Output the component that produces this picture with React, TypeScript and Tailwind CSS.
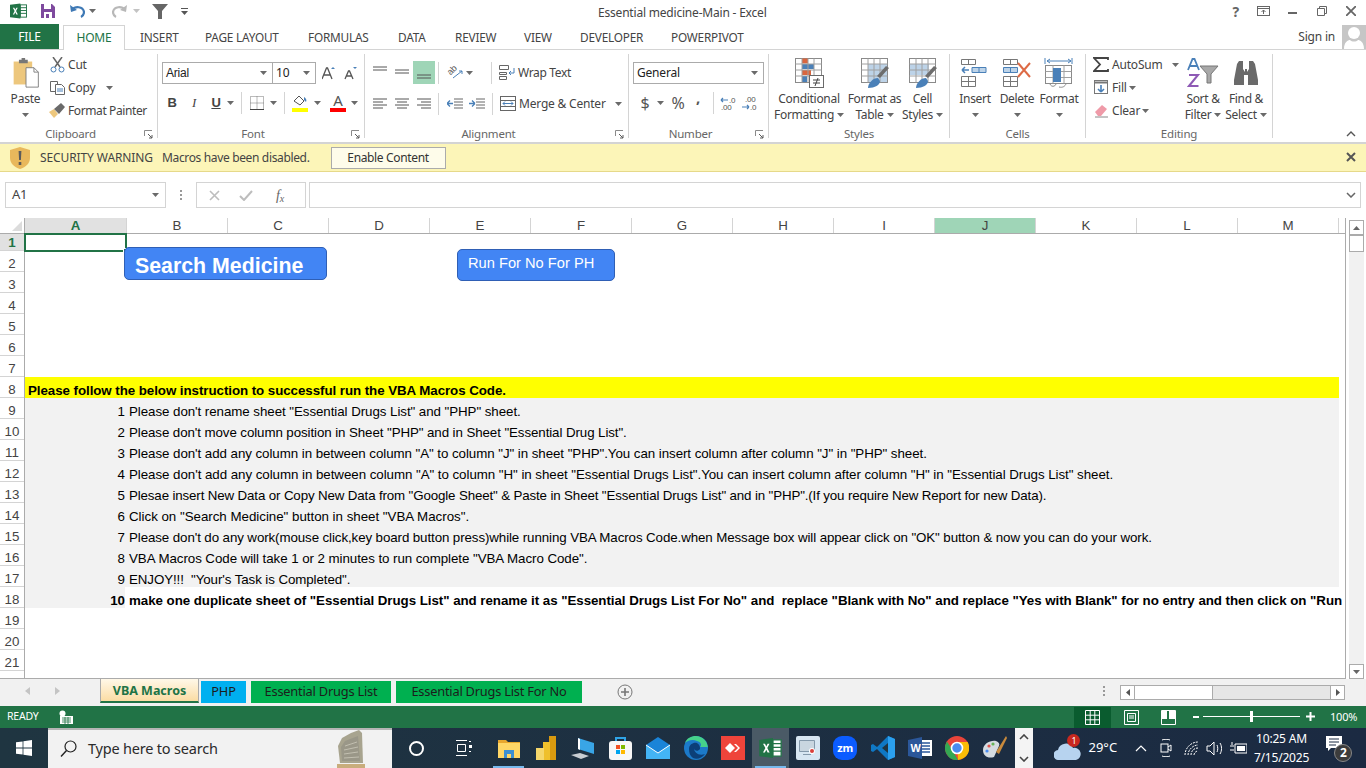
import React from 'react';

const COLUMNS = ['A', 'B', 'C', 'D', 'E', 'F', 'G', 'H', 'I', 'J', 'K', 'L', 'M'];

// tracking per row: the reference's hinted Arial doesn't advance evenly
const STEPS = [
    { text: `Please don't rename sheet "Essential Drugs List" and "PHP" sheet.`, tracking: 'tracking-[-0.06px]' },
    { text: `Please don't move column position in Sheet "PHP" and in Sheet "Essential Drug List".`, tracking: 'tracking-[-0.09px]' },
    { text: `Please don't add any column in between column "A" to column "J" in sheet "PHP".You can insert column after column "J" in "PHP" sheet.`, tracking: 'tracking-[-0.06px]' },
    { text: `Please don't add any column in between column "A" to column "H" in sheet "Essential Drugs List".You can insert column after column "H" in "Essential Drugs List" sheet.`, tracking: 'tracking-[-0.05px]' },
    { text: `Plesae insert New Data or Copy New Data from "Google Sheet" & Paste in Sheet "Essential Drugs List" and in "PHP".(If you require New Report for new Data).`, tracking: 'tracking-[-0.14px]' },
    { text: `Click on "Search Medicine" button in sheet "VBA Macros".`, tracking: 'tracking-[-0.02px]' },
    { text: `Please don't do any work(mouse click,key board button press)while running VBA Macros Code.when Message box will appear click on "OK" button & now you can do your work.`, tracking: 'tracking-[-0.1px]' },
    { text: `VBA Macros Code will take 1 or 2 minutes to run complete "VBA Macro Code".`, tracking: 'tracking-[-0.06px]' },
    { text: `ENJOY!!!  "Your's Task is Completed".`, tracking: 'tracking-[-0.09px]' },
    { text: `make one duplicate sheet of "Essential Drugs List" and rename it as "Essential Drugs List For No" and  replace "Blank with No" and replace "Yes with Blank" for no entry and then click on "Run`, tracking: 'tracking-[-0.05px]' },
];

const ROW_NUMBERS = Array.from({ length: 22 }, (_, i) => i + 1);

function Caret({ className = '' }: { className?: string }) {
    return (
        <svg width="7" height="4" viewBox="0 0 7 4" className={`shrink-0 ${className}`}>
            <path d="M0 0h7L3.5 4z" fill="#6a6a6a" />
        </svg>
    );
}

function DialogMark() {
    return (
        <svg width="9" height="9" viewBox="0 0 9 9" className="absolute right-[4px] bottom-[-1px]">
            <path d="M.5 6V.5H8" fill="none" stroke="#8a8a8a" />
            <path d="M4 4l4 4M8 5v3H5" fill="none" stroke="#5a5a5a" />
        </svg>
    );
}

function Group({ label, width, mark, children }: { label: string; width: string; mark?: boolean; children: React.ReactNode }) {
    return (
        <div className={`relative h-[84px] mt-[4px] border-r border-[#d4d4d4] shrink-0 ${width}`}>
            <div className="h-[72px]">{children}</div>
            <div className={`absolute left-0 right-0 bottom-[-4px] text-center text-[11.5px] leading-[16px] text-[#666666] ${mark ? 'pr-[16px]' : ''}`}>{label}</div>
            {mark && <DialogMark />}
        </div>
    );
}

function BigButton({ icon, lines, width, caretOnly }: { icon: React.ReactNode; lines: string[]; width: string; caretOnly?: boolean }) {
    return (
        <div className={`flex flex-col items-center shrink-0 ${width}`}>
            <div className="h-[37px] flex items-center justify-center">{icon}</div>
            <div className="text-[12px] leading-[16px] text-[#444444] whitespace-nowrap tracking-[-0.3px]">{lines[0]}</div>
            {caretOnly ? (
                <Caret className="mt-[6px]" />
            ) : (
                <div className="flex items-center gap-[3px] text-[12px] leading-[16px] text-[#444444] whitespace-nowrap tracking-[-0.3px]">
                    {lines[1]}
                    <Caret />
                </div>
            )}
        </div>
    );
}

function Sep() {
    return <div className="w-px h-[22px] bg-[#d4d4d4] shrink-0" />;
}

function AlignIcon({ kind }: { kind: 'left' | 'center' | 'right' }) {
    const rows = kind === 'left'
        ? ['M0 1h14', 'M0 4h10', 'M0 7h14', 'M0 10h10']
        : kind === 'center'
            ? ['M0 1h14', 'M2 4h10', 'M0 7h14', 'M2 10h10']
            : ['M0 1h14', 'M4 4h10', 'M0 7h14', 'M4 10h10'];
    return (
        <svg width="14" height="11" viewBox="0 0 14 11">
            <path d={rows.join('')} stroke="#555555" fill="none" />
        </svg>
    );
}

function ExcelMark({ size }: { size: string }) {
    return (
        <svg viewBox="0 0 18 16" className={size}>
            <rect x="8" y="1.500" width="9.500" height="13" fill="#ffffff" stroke="#217346" />
            <path d="M11 1.500v13M8 4.500h9.500M8 7.500h9.500M8 10.500h9.500" stroke="#217346" />
            <path d="M0 1.500L11 0v16L0 14.500z" fill="#217346" />
            <path d="M3 4.500h1.600L5.600 6.700 6.700 4.500h1.500L6.400 8l1.900 3.600H6.700L5.600 9.300 4.500 11.600H3L4.900 8z" fill="#ffffff" />
        </svg>
    );
}

function TableIcon({ accent }: { accent: 'cond' | 'table' | 'cell' }) {
    return (
        <svg width="30" height="32" viewBox="0 0 30 32">
            <rect x="1.500" y="1.500" width="26" height="24" fill="#ffffff" stroke="#8a8a8a" />
            {accent === 'cond' ? (
                <>
                    <path d="M8 1.500h6v5H8z" fill="#d9663f" />
                    <path d="M8 7h12v5H8z" fill="#4a80b8" />
                    <path d="M8 13h9v5H8z" fill="#d9663f" />
                    <path d="M8 19h5v6H8z" fill="#4a80b8" />
                    <path d="M8 1.500v24M14 1.500v24M20 1.500v24M1.500 7h26M1.500 13h26M1.500 19h26" stroke="#a0a0a0" fill="none" />
                    <rect x="15.500" y="18.500" width="14" height="12" fill="#ffffff" stroke="#6a6a6a" />
                    <path d="M19 23h7M19 26h7M24 21l-3 8" stroke="#444444" fill="none" />
                </>
            ) : (
                <>
                    <path d={accent === 'table' ? 'M8 7h19v18H8z' : 'M2 7h19v11H2z'} fill="#bdd3e8" />
                    <path d="M8 1.500v24M14 1.500v24M20 1.500v24M1.500 7h26M1.500 13h26M1.500 19h26" stroke="#a0a0a0" fill="none" />
                    <path d="M17 19l9-10 3 2-9 10z" fill="#6d6d6d" />
                    <path d="M8 31c0-5 5-10 10-10l2 3c0 4-5 7-12 7z" fill="#4a80b8" />
                </>
            )}
        </svg>
    );
}

function CellsIcon({ kind }: { kind: 'insert' | 'delete' | 'format' }) {
    if (kind === 'format') {
        return (
            <svg width="30" height="32" viewBox="0 0 30 32">
                <path d="M1 1v6M28 1v6M3 4h24M3 4l3-2M3 4l3 2M27 4l-3-2M27 4l-3 2" stroke="#4a80b8" fill="none" />
                <rect x="1.500" y="8.500" width="26" height="18" fill="#fff" stroke="#8a8a8a" />
                <path d="M9 8.500v18M20 8.500v18M1.500 14.500h26M1.500 20.500h26" stroke="#a0a0a0" />
                <rect x="9" y="11" width="8" height="14" fill="#4a80b8" />
                <path d="M6 27c1 3 5 3 6 0M15 30c4 1 6-1 7-3" stroke="#8a8a8a" fill="none" />
            </svg>
        );
    }
    return (
        <svg width="30" height="30" viewBox="0 0 30 30">
            <path d="M1.500 1.500h14v5h-14zM8.500 1.500v5M1.500 18.500h14v10h-14zM8.500 18.500v10M1.500 23.500h14" fill="#fff" stroke="#777777" />
            {kind === 'insert' ? (
                <>
                    <path d="M12 9.500h14v5H12zM19 9.500v5" fill="#bdd3e8" stroke="#4a80b8" />
                    <path d="M9 12H2M2 12l3-3M2 12l3 3" stroke="#4a80b8" strokeWidth="1.500" fill="none" />
                </>
            ) : (
                <>
                    <path d="M1.500 9.500h14v5h-14zM8.500 9.500v5" fill="#bdd3e8" stroke="#4a80b8" />
                    <path d="M16 5l12 14M28 5L16 19" stroke="#dd6a45" strokeWidth="2" fill="none" />
                </>
            )}
        </svg>
    );
}

function ClipboardRibbon() {
    return (
        <div className="flex">
            <div className="flex flex-col items-center w-[41px] ml-[5px] shrink-0">
                <svg width="28" height="30" viewBox="0 0 30 34" className="mt-[4px]">
                    <path d="M1 4h21v26H1z" fill="#edc77d" />
                    <path d="M7 2h3V0h4v2h3v4H7z" fill="#777777" />
                    <path d="M15 11h9l5 5v17H15z" fill="#ffffff" stroke="#777777" />
                    <path d="M24 11v5h5" fill="none" stroke="#777777" />
                </svg>
                <div className="text-[12px] leading-[16px] mt-[3px] text-[#444444]">Paste</div>
                <Caret className="mt-[6px]" />
            </div>
            <div className="flex flex-col -mt-[1px] ml-[4px] text-[12px] text-[#444444]">
                <div className="flex items-center h-[23px] gap-[3px]">
                    <svg width="15" height="16" viewBox="0 0 15 16">
                        <path d="M3 0l7 10M12 0L5 10" stroke="#666666" strokeWidth="1.500" fill="none" />
                        <circle cx="3.500" cy="12.500" r="2.500" fill="none" stroke="#4a80b8" />
                        <circle cx="11.500" cy="12.500" r="2.500" fill="none" stroke="#4a80b8" />
                    </svg>
                    Cut
                </div>
                <div className="flex items-center h-[23px] gap-[3px]">
                    <svg width="15" height="14" viewBox="0 0 15 14">
                        <path d="M.5.5h7v10h-7z" fill="#fff" stroke="#666666" />
                        <path d="M5.500 3.500h6l3 3v7h-9z" fill="#fff" stroke="#666666" />
                        <path d="M7 8h6M7 10h6" stroke="#4a80b8" />
                    </svg>
                    Copy
                    <Caret className="ml-[8px]" />
                </div>
                <div className="flex items-center h-[23px] gap-[3px] -ml-[1px] whitespace-nowrap tracking-[-0.4px]">
                    <svg width="16" height="15" viewBox="0 0 16 15">
                        <path d="M0 9l5-3 4 5-4 4z" fill="#edc77d" />
                        <path d="M5 6l7-6 4 4-6 7z" fill="#6a6a6a" />
                    </svg>
                    Format Painter
                </div>
            </div>
        </div>
    );
}

function FontRibbon() {
    return (
        <div className="pt-[8px] pl-[4px]">
            <div className="flex items-center h-[22px]">
                <div className="flex items-center justify-between w-[111px] h-[22px] border border-[#ababab] pl-[3px] pr-[5px] text-[12px] text-[#222222] font-['Liberation_Sans',sans-serif]">
                    Arial <Caret />
                </div>
                <div className="flex items-center justify-between w-[43px] h-[22px] border border-l-0 border-[#ababab] pl-[3px] pr-[5px] text-[12px] text-[#222222]">
                    10 <Caret />
                </div>
                <svg width="14" height="14" viewBox="0 0 14 14" className="ml-[6px]">
                    <path d="M0 13L4.500 2h1L10 13M2 9h6" stroke="#555555" strokeWidth="1.300" fill="none" />
                    <path d="M9 3l2-2 2 2z" fill="#4a80b8" />
                </svg>
                <svg width="14" height="14" viewBox="0 0 14 14" className="ml-[8px]">
                    <path d="M1 13L4.500 5h1L9 13M2.500 10h5" stroke="#555555" strokeWidth="1.300" fill="none" />
                    <path d="M9 1h4l-2 2z" fill="#4a80b8" />
                </svg>
            </div>
            <div className="flex items-center h-[22px] mt-[8px] text-[#444444]">
                <span className="w-[22px] ml-[-1px] text-center text-[13px] font-bold font-['Liberation_Sans',sans-serif]">B</span>
                <span className="w-[22px] text-center text-[13px] italic font-['Liberation_Serif',serif]">I</span>
                <span className="w-[22px] text-center text-[13px] font-bold underline font-['Liberation_Sans',sans-serif]">U</span>
                <Caret className="mr-[7px]" />
                <Sep />
                <svg width="14" height="14" viewBox="0 0 14 14" className="ml-[8px] mr-[6px]">
                    <path d="M.5.5h13v13H.5z" fill="none" stroke="#777777" strokeDasharray="1 1" />
                    <path d="M7 .5v13M.5 7h13" stroke="#777777" strokeDasharray="1 1" />
                    <path d="M0 13.500h14" stroke="#444444" />
                </svg>
                <Caret className="mr-[7px]" />
                <Sep />
                <div className="relative w-[16px] h-[18px] ml-[7px] mr-[6px]">
                    <svg width="16" height="13" viewBox="0 0 16 13" className="absolute top-0 left-0">
                        <path d="M2 7l5-5 5 5-4 4z" fill="#fff" stroke="#555555" />
                        <path d="M12 3c2 1 3 3 2 5l-2-2z" fill="#4a80b8" />
                    </svg>
                    <div className="absolute bottom-0 left-0 w-[16px] h-[4px] bg-[#ffff00]" />
                </div>
                <Caret className="mr-[9px]" />
                <div className="relative w-[16px] h-[18px] mr-[5px]">
                    <div className="absolute top-[-3px] left-0 w-[16px] text-center text-[15px] leading-[18px] text-[#555555]">A</div>
                    <div className="absolute bottom-0 left-0 w-[16px] h-[4px] bg-[#ff0000]" />
                </div>
                <Caret />
            </div>
        </div>
    );
}

function AlignmentRibbon() {
    return (
        <div className="pt-[7px] pl-[4px]">
            <div className="flex items-center h-[23px] text-[12px] text-[#444444]">
                <div className="w-[22px] flex justify-center">
                    <svg width="14" height="7" viewBox="0 0 14 7" className="mb-[6px]"><path d="M0 1h14M0 4h14" stroke="#555555" /></svg>
                </div>
                <div className="w-[22px] flex justify-center">
                    <svg width="14" height="7" viewBox="0 0 14 7"><path d="M0 1h14M0 4h14" stroke="#555555" /></svg>
                </div>
                <div className="w-[22px] h-[23px] bg-[#9fd5b7] flex items-end justify-center pb-[4px]">
                    <svg width="14" height="7" viewBox="0 0 14 7"><path d="M0 2h14M0 5h14" stroke="#555555" /></svg>
                </div>
                <div className="w-px h-[22px] bg-[#d4d4d4] ml-[3px]" />
                <div className="relative w-[16px] h-[15px] ml-[8px]">
                    <span className="absolute left-[0px] top-[-1px] text-[9px] leading-[12px] -rotate-45 font-['Liberation_Sans',sans-serif] text-[#555555]">ab</span>
                    <svg width="16" height="15" viewBox="0 0 16 15" className="absolute left-0 top-0">
                        <path d="M6 13l9-7M15 6h-3M15 6v3" stroke="#4a80b8" fill="none" />
                    </svg>
                </div>
                <Caret className="ml-[3px]" />
                <div className="w-px h-[22px] bg-[#d4d4d4] ml-[18px]" />
                <svg width="16" height="15" viewBox="0 0 16 15" className="ml-[7px]">
                    <path d="M.5.5h9v4h-9zM.5 7.500h7v2h-7zM.5 11.500h7v3h-7z" fill="none" stroke="#666666" />
                    <path d="M15 3v5h-5M10 8l2-2M10 8l2 2" fill="none" stroke="#4a80b8" />
                </svg>
                <span className="ml-[3px] whitespace-nowrap tracking-[-0.35px]">Wrap Text</span>
            </div>
            <div className="flex items-center h-[23px] mt-[8px] text-[12px] text-[#444444]">
                <div className="w-[22px] flex justify-center"><AlignIcon kind="left" /></div>
                <div className="w-[22px] flex justify-center"><AlignIcon kind="center" /></div>
                <div className="w-[22px] flex justify-center"><AlignIcon kind="right" /></div>
                <div className="w-px h-[22px] bg-[#d4d4d4] ml-[3px]" />
                {[0, 1].map((i) => (
                    <svg key={i} width="16" height="12" viewBox="0 0 16 12" className={i === 0 ? 'ml-[8px]' : 'ml-[6px]'}>
                        <path d="M7 1h9M7 4h9M7 7h9M7 10h9" stroke="#666666" />
                        <path d={i === 0 ? 'M0 5.500h6M0 5.500l3-3M0 5.500l3 3' : 'M6 5.500H0M6 5.500l-3-3M6 5.500l-3 3'} stroke="#4a80b8" strokeWidth="1.300" fill="none" />
                    </svg>
                ))}
                <div className="w-px h-[22px] bg-[#d4d4d4] ml-[7px]" />
                <svg width="16" height="15" viewBox="0 0 16 15" className="ml-[7px]">
                    <rect x=".5" y=".5" width="15" height="14" fill="none" stroke="#666666" />
                    <path d="M.5 4.500h15M.5 10.500h15" stroke="#666666" />
                    <path d="M3 7.500h10M3 7.500l2-2M3 7.500l2 2M13 7.500l-2-2M13 7.500l-2 2" stroke="#4a80b8" fill="none" />
                </svg>
                <span className="ml-[3px] whitespace-nowrap">Merge &amp; Center</span>
                <Caret className="ml-[9px]" />
            </div>
        </div>
    );
}

function NumberRibbon() {
    return (
        <div className="pt-[8px] pl-[4px]">
            <div className="flex items-center justify-between w-[131px] h-[22px] border border-[#ababab] pl-[3px] pr-[5px] text-[12px] text-[#222222]">
                General <Caret />
            </div>
            <div className="flex items-center h-[22px] mt-[8px] text-[#555555]">
                <span className="w-[24px] text-center text-[16px] leading-[20px]">$</span>
                <Caret />
                <span className="ml-[4px] w-[20px] text-center text-[16px] leading-[20px]">%</span>
                <span className="ml-[3px] w-[14px] mb-[12px] text-center text-[15px] font-bold leading-[20px]">,</span>
                <div className="w-px h-[22px] bg-[#d4d4d4] ml-[8px]" />
                <svg width="18" height="15" viewBox="0 0 18 15" className="ml-[6px]">
                    <path d="M1 4h7M1 4l2-2M1 4l2 2" stroke="#4a80b8" fill="none" strokeWidth="1.200" />
                    <text x="9" y="7" fontSize="8" fill="#555555" fontFamily="Liberation Sans">.0</text>
                    <text x="1" y="14" fontSize="8" fill="#555555" fontFamily="Liberation Sans">.00</text>
                </svg>
                <svg width="18" height="15" viewBox="0 0 18 15" className="ml-[3px]">
                    <text x="4" y="6" fontSize="8" fill="#555555" fontFamily="Liberation Sans">.00</text>
                    <path d="M1 11h7M8 11l-2-2M8 11l-2 2" stroke="#4a80b8" fill="none" strokeWidth="1.200" />
                    <text x="9" y="14" fontSize="8" fill="#555555" fontFamily="Liberation Sans">.0</text>
                </svg>
            </div>
        </div>
    );
}

function EditingRibbon() {
    return (
        <div className="flex">
            <div className="flex flex-col -mt-[1px] ml-[7px] w-[88px] text-[12px] text-[#444444]">
                <div className="flex items-center h-[23px]">
                    <svg width="16" height="15" viewBox="0 0 16 15"><path d="M15 3V1H1l6 6.500L1 14h14v-2" fill="none" stroke="#444444" strokeWidth="1.800" /></svg>
                    <span className="ml-[3px]">AutoSum</span>
                    <Caret className="ml-[9px]" />
                </div>
                <div className="flex items-center h-[23px]">
                    <svg width="15" height="15" viewBox="0 0 15 15" className="ml-[1px]">
                        <rect x=".5" y=".5" width="13" height="13" fill="#fff" stroke="#777777" />
                        <path d="M.5 2.500h13" stroke="#777777" strokeWidth="2" />
                        <path d="M7 5v7M7 12L4 9M7 12l3-3" stroke="#4a80b8" strokeWidth="1.600" fill="none" />
                    </svg>
                    <span className="ml-[3px]">Fill</span>
                    <Caret className="ml-[2px]" />
                </div>
                <div className="flex items-center h-[23px]">
                    <svg width="15" height="14" viewBox="0 0 15 14" className="ml-[1px]">
                        <path d="M1 8l7-7 5 4-6 7H4z" fill="#ef9aa8" />
                        <path d="M1 13h13" stroke="#888888" />
                    </svg>
                    <span className="ml-[3px]">Clear</span>
                    <Caret className="ml-[2px]" />
                </div>
            </div>
            <BigButton
                width="w-[44px]"
                lines={['Sort &', 'Filter']}
                icon={
                    <svg width="32" height="30" viewBox="0 0 32 30">
                        <path d="M1 12L5.500 1h2L12 12M3 8h7" stroke="#4a80b8" strokeWidth="1.800" fill="none" />
                        <path d="M2 17h9L2 28h9.500" stroke="#8e5ab5" strokeWidth="2" fill="none" />
                        <path d="M13 8h18l-7 8v9h-4v-9z" fill="#a8a8a8" stroke="#777777" />
                    </svg>
                }
            />
            <BigButton
                width="w-[42px]"
                lines={['Find &', 'Select']}
                icon={
                    <svg width="26" height="26" viewBox="0 0 26 26">
                        <path d="M4 4l2-3h4v8l2 3v-3h2v3l2-3V1h4l2 3 3 16v5H15V15h-4v10H1v-5z" fill="#6a6a6a" />
                    </svg>
                }
            />
        </div>
    );
}

function SheetTab({ label, color, width }: { label: string; color: string; width: string }) {
    return (
        <div className={`flex items-center justify-center h-[22px] text-[12.8px] text-[#1c1c1c] mr-[5px] shrink-0 ${color} ${width}`}>{label}</div>
    );
}

function Slot({ active, running, children }: { active?: boolean; running?: boolean; children: React.ReactNode }) {
    return (
        <div className={`relative flex items-center justify-center w-[37.4px] h-[40px] shrink-0 ${active ? 'bg-[#4a5a66]' : ''}`}>
            {children}
            {(active || running) && <div className="absolute bottom-0 left-[3px] right-[3px] h-[2px] bg-[#76b9ed]" />}
        </div>
    );
}

function TopTab({ left, label }: { left: string; label: string }) {
    return <span className={`absolute top-[4px] text-[11.8px] ${left}`}>{label}</span>;
}

export default function App() {
    return (
        <div className="w-[1366px] h-[768px] overflow-hidden flex flex-col bg-white font-['Noto_Sans',sans-serif] tracking-[-0.2px]">
            {/* title bar */}
            <div className="relative flex items-center h-[25px] pb-[3px] shrink-0">
                <ExcelMark size="w-[17px] h-[16px] ml-[10px]" />
                <svg width="16" height="16" viewBox="0 0 16 16" className="ml-[13px]">
                    <path d="M1 1h11l3 3v11H1z" fill="#7e4a9e" />
                    <path d="M4 1h7v5H4z" fill="#fff" />
                    <path d="M4 9h8v6H4z" fill="#fff" />
                    <path d="M6 11h3v4H6z" fill="#7e4a9e" />
                </svg>
                <svg width="16" height="14" viewBox="0 0 16 14" className="ml-[13px]">
                    <path d="M3 6c3-4 11-4 12 2 0 2-1 4-3 5" fill="none" stroke="#3f79b5" strokeWidth="2.200" />
                    <path d="M1 1l1 7 6-2z" fill="#3f79b5" />
                </svg>
                <Caret className="ml-[4px]" />
                <svg width="16" height="14" viewBox="0 0 16 14" className="ml-[16px]">
                    <path d="M13 6c-3-4-11-4-12 2 0 2 1 4 3 5" fill="none" stroke="#b8b8b8" strokeWidth="2.200" />
                    <path d="M15 1l-1 7-6-2z" fill="#b8b8b8" />
                </svg>
                <Caret className="ml-[5px] opacity-40" />
                <svg width="16" height="15" viewBox="0 0 16 15" className="ml-[12px]">
                    <path d="M0 0h16l-6 7v8H6V7z" fill="#666666" />
                </svg>
                <svg width="7" height="7" viewBox="0 0 7 7" className="ml-[13px]">
                    <path d="M0 3h7L3.500 7z" fill="#555555" stroke="none" />
                    <path d="M0 .5h7" stroke="#555555" />
                </svg>
                <div className="absolute left-[598px] top-[5px] text-[12px] leading-[16px] text-[#444444] whitespace-nowrap">Essential medicine-Main - Excel</div>
                <div className="absolute right-0 top-0 flex items-center h-[22px]">
                    <span className="absolute right-[127px] top-[1px] text-[14px] font-bold text-[#666666]">?</span>
                    <svg width="14" height="11" viewBox="0 0 14 11" className="mr-[17px]">
                        <rect x=".5" y=".5" width="12" height="9" fill="none" stroke="#666666" />
                        <path d="M.5 2.500h12M6.500 8V4M6.500 4l-2 2M6.500 4l2 2" stroke="#666666" fill="none" />
                    </svg>
                    <div className="w-[9px] h-[2px] bg-[#666666] mr-[20px] mt-[3px]" />
                    <svg width="10" height="10" viewBox="0 0 10 10" className="mr-[19px]">
                        <path d="M.5 2.500h7v7h-7zM2.500 2.500v-2h7v7h-2" fill="none" stroke="#666666" />
                    </svg>
                    <svg width="10" height="10" viewBox="0 0 10 10" className="mr-[10px]">
                        <path d="M0 0l10 10M10 0L0 10" stroke="#666666" strokeWidth="1.800" />
                    </svg>
                </div>
            </div>

            {/* ribbon tabs */}
            <div className="relative flex items-end h-[25px] shrink-0 border-b border-[#d4d4d4] text-[12px] text-[#444444]">
                <div className="flex items-center justify-center w-[59px] h-[25px] bg-[#217346] text-white">FILE</div>
                <div className="flex items-center justify-center w-[62px] h-[25px] ml-[4px] -mb-px bg-white border border-b-0 border-[#d4d4d4] text-[#217346]">HOME</div>
                <TopTab left="left-[140px]" label="INSERT" />
                <TopTab left="left-[205px]" label="PAGE LAYOUT" />
                <TopTab left="left-[308px]" label="FORMULAS" />
                <TopTab left="left-[398px]" label="DATA" />
                <TopTab left="left-[455px]" label="REVIEW" />
                <TopTab left="left-[524px]" label="VIEW" />
                <TopTab left="left-[580px]" label="DEVELOPER" />
                <TopTab left="left-[671px]" label="POWERPIVOT" />
                <span className="absolute right-[31px] top-[3px]">Sign in</span>
                <div className="absolute right-0 top-0 w-[24px] h-[24px] bg-[#c6c6c6] overflow-hidden flex justify-center">
                    <svg width="24" height="24" viewBox="0 0 24 24">
                        <circle cx="12" cy="8" r="6" fill="#ffffff" />
                        <path d="M2 24c0-7 4-9 6-9 2 2 6 2 8 0 2 0 6 2 6 9z" fill="#ffffff" />
                    </svg>
                </div>
            </div>

            {/* ribbon */}
            <div className="relative flex h-[94px] shrink-0 border-b-2 border-[#d4d4d4]">
                <Group label="Clipboard" mark width="w-[158px]"><ClipboardRibbon /></Group>
                <Group label="Font" mark width="w-[207px]"><FontRibbon /></Group>
                <Group label="Alignment" mark width="w-[264px]"><AlignmentRibbon /></Group>
                <Group label="Number" mark width="w-[140px]"><NumberRibbon /></Group>
                <Group label="Styles" width="w-[181px]">
                    <div className="flex pl-[4px]">
                        <BigButton width="w-[72px]" lines={['Conditional', 'Formatting']} icon={<TableIcon accent="cond" />} />
                        <BigButton width="w-[59px]" lines={['Format as', 'Table']} icon={<TableIcon accent="table" />} />
                        <BigButton width="w-[37px]" lines={['Cell', 'Styles']} icon={<TableIcon accent="cell" />} />
                    </div>
                </Group>
                <Group label="Cells" width="w-[136px]">
                    <div className="flex pl-[4px]">
                        <BigButton width="w-[42px]" caretOnly lines={['Insert']} icon={<CellsIcon kind="insert" />} />
                        <BigButton width="w-[42px]" caretOnly lines={['Delete']} icon={<CellsIcon kind="delete" />} />
                        <BigButton width="w-[42px]" caretOnly lines={['Format']} icon={<CellsIcon kind="format" />} />
                    </div>
                </Group>
                <Group label="Editing" width="w-[187px]"><EditingRibbon /></Group>
                <svg width="10" height="6" viewBox="0 0 10 6" className="absolute right-[10px] bottom-[5px]">
                    <path d="M1 5l4-4 4 4" fill="none" stroke="#555555" strokeWidth="1.400" />
                </svg>
            </div>

            {/* security warning */}
            <div className="relative flex items-center h-[28px] shrink-0 bg-[#fcf5b8] border-b border-[#e6d98a] text-[12px] text-[#444444]">
                <svg width="20" height="22" viewBox="0 0 20 22" className="ml-[10px]">
                    <path d="M10 0l10 3v8c0 5-4 9-10 11C4 20 0 16 0 11V3z" fill="#e8b85c" />
                    <path d="M8.600 4h2.800l-.5 9H9.100zM8.700 15h2.600v3H8.700z" fill="#5b5b5b" />
                </svg>
                <span className="ml-[10px] whitespace-nowrap tracking-[-0.1px]">SECURITY WARNING</span>
                <span className="ml-[9px] whitespace-nowrap tracking-[-0.35px]">Macros have been disabled.</span>
                <div className="flex items-center justify-center w-[115px] h-[22px] ml-[21px] bg-white/70 border border-[#ababab] text-[#333333] tracking-[-0.35px]">Enable Content</div>
                <svg width="10" height="10" viewBox="0 0 10 10" className="absolute right-[10px] top-[8px]">
                    <path d="M1 1l8 8M9 1L1 9" stroke="#555555" strokeWidth="2" />
                </svg>
            </div>

            {/* formula bar */}
            <div className="flex items-center h-[46px] shrink-0 text-[#444444]">
                <div className="flex items-center justify-between w-[161px] h-[26px] ml-[5px] border border-[#d4d4d4] pl-[6px] pr-[6px] text-[13px]">
                    A1 <Caret />
                </div>
                <div className="flex flex-col gap-[2px] ml-[14px]">
                    <div className="w-[2px] h-[2px] bg-[#999999]" />
                    <div className="w-[2px] h-[2px] bg-[#999999]" />
                    <div className="w-[2px] h-[2px] bg-[#999999]" />
                </div>
                <div className="flex items-center w-[110px] h-[26px] ml-[14px] border border-[#d4d4d4]">
                    <svg width="11" height="11" viewBox="0 0 11 11" className="ml-[12px]"><path d="M1 1l9 9M10 1l-9 9" stroke="#bdbdbd" strokeWidth="1.600" /></svg>
                    <svg width="14" height="11" viewBox="0 0 14 11" className="ml-[19px]"><path d="M1 6l4 4 8-9" fill="none" stroke="#bdbdbd" strokeWidth="2" /></svg>
                    <span className="ml-[23px] text-[14px] italic font-['Liberation_Serif',serif] text-[#666666]">f<sub className="text-[10px]">x</sub></span>
                </div>
                <div className="flex items-center justify-end w-[1052px] h-[26px] ml-[3px] border border-[#d4d4d4] pr-[4px]">
                    <svg width="10" height="6" viewBox="0 0 10 6"><path d="M1 1l4 4 4-4" fill="none" stroke="#666666" strokeWidth="1.500" /></svg>
                </div>
            </div>

            {/* sheet */}
            <div className="flex h-[461px] shrink-0">
                <div className="w-[1346px] h-[461px] overflow-hidden border-r border-[#ababab] border-b font-['Liberation_Sans',Arial,sans-serif] tracking-normal text-[13.33px] text-[#000000] relative">
                    <div className="flex h-[16px] border-b border-[#ababab]">
                        <div className="relative w-[25px] border-r border-[#ababab] shrink-0">
                            <svg width="10" height="10" viewBox="0 0 10 10" className="absolute right-[2px] bottom-[2px]"><path d="M10 0v10H0z" fill="#dcdcdc" /></svg>
                        </div>
                        {COLUMNS.map((c) => (
                            <div
                                key={c}
                                className={`flex items-center justify-center h-[15px] shrink-0 border-r border-[#d4d4d4] ${c === 'A' ? 'w-[102px] bg-[#e1e1e1] text-[#217346] font-bold' : 'w-[101px] text-[#444444]'} ${c === 'J' ? 'bg-[#9fd5b7]' : ''}`}
                            >
                                {c}
                            </div>
                        ))}
                    </div>
                    <div className="flex">
                        <div className="w-[25px] shrink-0 border-r border-[#ababab] text-[#444444]">
                            {ROW_NUMBERS.map((n) => (
                                <div
                                    key={n}
                                    className={`flex items-end justify-center border-b border-[#d4d4d4] leading-[15px] ${n === 1 ? 'h-[17px] bg-[#e1e1e1] text-[#217346] font-bold' : 'h-[21px]'}`}
                                >
                                    {n < 22 ? n : ''}
                                </div>
                            ))}
                        </div>
                        <div className="w-[1320px] shrink-0">
                            <div className="h-[143px]" />
                            <div className="flex items-end w-[1314px] h-[21px] pl-[3px] leading-[15px] font-bold bg-[#ffff00] whitespace-nowrap tracking-[-0.06px]">
                                Please follow the below instruction to successful run the VBA Macros Code.
                            </div>
                            {STEPS.map((step, i) => (
                                <div key={i} className={`flex items-end h-[21px] leading-[15px] whitespace-pre ${i === 9 ? 'font-bold' : 'w-[1314px] bg-[#f2f2f2]'}`}>
                                    <span className={`w-[100px] text-right shrink-0 ${i === 9 ? 'bg-[#f2f2f2] h-[21px] pt-[6px]' : ''}`}>{i + 1}</span>
                                    <span className={`pl-[4px] ${step.tracking}`}>{step.text}</span>
                                </div>
                            ))}
                        </div>
                    </div>
                    {/* active cell */}
                    <div className="absolute left-[24px] top-[15px] w-[103px] h-[19px] border-2 border-[#217346]">
                        <div className="absolute right-[-3px] bottom-[-3px] w-[5px] h-[5px] bg-[#217346] border border-white" />
                    </div>
                    {/* macro buttons on the sheet */}
                    <div className="absolute left-[124px] top-[29px] flex items-center w-[203px] h-[33px] pl-[10px] pt-[7px] rounded-[5px] bg-[#4285f4] border border-[#2f5fb5] text-white text-[21.33px] font-bold whitespace-nowrap">
                        Search Medicine
                    </div>
                    <div className="absolute left-[457px] top-[31px] flex items-start w-[158px] h-[32px] pl-[10px] pt-[2px] rounded-[5px] bg-[#4285f4] border border-[#2f5fb5] text-white text-[14.67px] whitespace-nowrap">
                        Run For No For PH
                    </div>
                </div>
                {/* vertical scrollbar */}
                <div className="flex flex-col items-center w-[20px] h-[461px] shrink-0 pt-[2px]">
                    <div className="flex items-center justify-center w-[15px] h-[15px] border border-[#ababab]">
                        <svg width="7" height="4" viewBox="0 0 7 4"><path d="M0 4h7L3.500 0z" fill="#666666" /></svg>
                    </div>
                    <div className="w-[15px] flex-1 bg-[#f1f1f1]">
                        <div className="w-[15px] h-[17px] bg-white border border-[#ababab]" />
                    </div>
                    <div className="flex items-center justify-center w-[15px] h-[15px] border border-[#ababab] bg-white">
                        <svg width="7" height="4" viewBox="0 0 7 4"><path d="M0 0h7L3.500 4z" fill="#666666" /></svg>
                    </div>
                </div>
            </div>

            {/* sheet tabs */}
            <div className="relative flex items-start h-[27px] shrink-0 bg-[#f1f1f1]">
                <svg width="6" height="8" viewBox="0 0 6 8" className="absolute left-[25px] top-[8px]"><path d="M5 0v8L0 4z" fill="#c4c4c4" /></svg>
                <svg width="6" height="8" viewBox="0 0 6 8" className="absolute left-[55px] top-[8px]"><path d="M0 0v8l5-4z" fill="#c4c4c4" /></svg>
                <div className="flex items-center justify-center ml-[100px] w-[99px] h-[25px] -mt-[1px] mr-[2px] pt-[2px] border-t border-x border-[#ababab] border-b-2 border-b-[#217346] bg-gradient-to-b from-[#fff8e8] to-[#fbdca3] text-[12.5px] font-bold text-[#217346] shrink-0 tracking-normal">
                    VBA Macros
                </div>
                <div className="flex mt-[2px]">
                    <SheetTab label="PHP" color="bg-[#00b0f0]" width="w-[45px]" />
                    <SheetTab label="Essential Drugs List" color="bg-[#00b050]" width="w-[140px]" />
                    <SheetTab label="Essential Drugs List For No" color="bg-[#00b050]" width="w-[186px]" />
                </div>
                <svg width="16" height="16" viewBox="0 0 16 16" className="absolute left-[617px] top-[5px]">
                    <circle cx="8" cy="8" r="7" fill="none" stroke="#777777" />
                    <path d="M8 4v8M4 8h8" stroke="#777777" strokeWidth="1.600" />
                </svg>
                <div className="absolute left-[1103px] top-[7px] flex flex-col gap-[2px]">
                    <div className="w-[2px] h-[2px] bg-[#999999]" />
                    <div className="w-[2px] h-[2px] bg-[#999999]" />
                    <div className="w-[2px] h-[2px] bg-[#999999]" />
                </div>
                <div className="absolute left-[1120px] top-[6px] flex items-stretch w-[225px] h-[15px] border border-[#ababab] bg-[#e6e6e6]">
                    <div className="flex items-center justify-center w-[14px] bg-white border-r border-[#ababab]">
                        <svg width="4" height="7" viewBox="0 0 4 7"><path d="M4 0v7L0 3.500z" fill="#555555" /></svg>
                    </div>
                    <div className="w-[78px] bg-white border-r border-[#ababab]" />
                    <div className="flex-1" />
                    <div className="flex items-center justify-center w-[14px] bg-white border-l border-[#ababab]">
                        <svg width="4" height="7" viewBox="0 0 4 7"><path d="M0 0v7l4-3.500z" fill="#555555" /></svg>
                    </div>
                </div>
            </div>

            {/* status bar */}
            <div className="relative flex items-center h-[22px] shrink-0 bg-[#217346] text-white text-[10.5px]">
                <span className="ml-[7px]">READY</span>
                <svg width="14" height="14" viewBox="0 0 14 14" className="ml-[20px]">
                    <circle cx="3.500" cy="3.500" r="3" fill="#ffffff" />
                    <path d="M1 6h13v8H1z" fill="#ffffff" />
                    <path d="M3 8h9M3 10h9M3 12h9M6 7v7M9 7v7" stroke="#217346" strokeWidth=".8" />
                </svg>
                <div className="absolute left-[1074px] top-[1px] flex items-center justify-center w-[37px] h-[21px] bg-[#0a5c2f]">
                    <svg width="15" height="15" viewBox="0 0 15 15"><path d="M.5.5h14v14H.5zM5.200.5v14M9.800.5v14M.5 5.200h14M.5 9.800h14" fill="none" stroke="#ffffff" /></svg>
                </div>
                <svg width="15" height="15" viewBox="0 0 15 15" className="absolute left-[1124px] top-[4px]"><path d="M.5.5h14v14H.5zM3.500 3.500h8v8h-8zM5 6h5M5 8h5" fill="none" stroke="#ffffff" /></svg>
                <svg width="15" height="15" viewBox="0 0 15 15" className="absolute left-[1161px] top-[4px]"><path d="M.5.5h14v14H.5z" fill="none" stroke="#ffffff" /><path d="M1 1h5v8H1zM8 1h6v8H8z" fill="#ffffff" /></svg>
                <div className="absolute left-[1193px] top-[10px] w-[6px] h-[2px] bg-white" />
                <div className="absolute left-[1203px] top-[10px] w-[97px] h-px bg-white" />
                <div className="absolute left-[1250px] top-[5px] w-[3px] h-[11px] bg-white" />
                <svg width="9" height="9" viewBox="0 0 9 9" className="absolute left-[1306px] top-[6px]"><path d="M4.500 0v9M0 4.500h9" stroke="#ffffff" strokeWidth="2" /></svg>
                <span className="absolute left-[1330px] top-[3px] text-[11px]">100%</span>
            </div>

            {/* taskbar */}
            <div className="relative flex items-center h-[40px] shrink-0 bg-gradient-to-r from-[#1f3541] to-[#1b2a42] text-white">
                <div className="flex items-center justify-center w-[48px] h-[40px] shrink-0">
                    <svg width="16" height="16" viewBox="0 0 16 16">
                        <path d="M0 2.300l6.600-.9v6.200H0zM7.400 1.300L16 0v7.600H7.400zM0 8.400h6.600v6.200L0 13.700zM7.400 8.400H16V16l-8.600-1.200z" fill="#ffffff" />
                    </svg>
                </div>
                <div className="relative flex items-center w-[344px] h-[40px] pb-[1px] bg-[#f2f2f2] border-t-2 border-[#b5b5b5] shrink-0 text-[#2b2b2b] text-[14.5px]">
                    <svg width="17" height="18" viewBox="0 0 17 18" className="ml-[12px]">
                        <circle cx="10.500" cy="6.500" r="5.500" fill="none" stroke="#222222" strokeWidth="1.200" />
                        <path d="M6.500 10.500L1 16.500" stroke="#222222" strokeWidth="1.400" />
                    </svg>
                    <span className="ml-[11px]">Type here to search</span>
                    <svg width="28" height="38" viewBox="0 0 28 38" className="absolute right-[27px] bottom-0">
                        <path d="M3 33L1 16 5 8 14 3 22 0 25 3 26 33z" fill="#a8a48f" />
                        <path d="M5 31L4 17l4-6 13-5 2 25z" fill="#9a9788" />
                        <path d="M8 16l12-4M7 20l14-3M7 24l14-2M7 28l15-1" stroke="#c2bfb0" />
                        <path d="M0 34h28v4H0z" fill="#c9ad7c" />
                    </svg>
                </div>
                <div className="flex items-center justify-center w-[48px] shrink-0">
                    <div className="w-[15px] h-[15px] rounded-full border-[2.5px] border-white" />
                </div>
                <div className="flex items-center justify-center w-[48px] shrink-0">
                    <svg width="16" height="16" viewBox="0 0 16 16">
                        <path d="M0 .5h11M0 15.500h11M1.500 4.500h8v7h-8z" fill="none" stroke="#ffffff" />
                        <path d="M13 1h2v1h-2zM13 5h3v3h-3zM13 11h2v1h-2z" fill="#ffffff" />
                    </svg>
                </div>
                <div className="flex ml-[2px]">
                    <Slot running>
                        <svg width="22" height="20" viewBox="0 0 22 20">
                            <path d="M0 2h8l2 2h12v16H0z" fill="#e8a72e" />
                            <path d="M0 5h22v15H0z" fill="#ffd766" />
                            <path d="M6 12h10v8h-3v-4H9v4H6z" fill="#3d8fd1" />
                        </svg>
                    </Slot>
                    <Slot>
                        <svg width="20" height="24" viewBox="0 0 20 24">
                            <path d="M13 0h7v24h-7z" fill="#d99a0f" />
                            <path d="M7 6h7v18H7z" fill="#efc02c" />
                            <path d="M0 12h8v12H0z" fill="#f5d76b" />
                        </svg>
                    </Slot>
                    <Slot>
                        <svg width="24" height="22" viewBox="0 0 24 22">
                            <path d="M7 1l16 5v11L7 12z" fill="#39a5e6" />
                            <path d="M0 18l9-2 9 3-8 3z" fill="#c9ced3" />
                            <path d="M7 1l2 1v11l-2-1z" fill="#ffffff" />
                        </svg>
                    </Slot>
                    <Slot>
                        <svg width="23" height="24" viewBox="0 0 23 24">
                            <path d="M7 6V2h9v4" fill="none" stroke="#2fa4e7" strokeWidth="2" />
                            <rect x="0" y="5" width="23" height="19" rx="3" fill="#f7f7f7" />
                            <path d="M7 9h4v4H7z" fill="#f25022" />
                            <path d="M12 9h4v4h-4z" fill="#7fba00" />
                            <path d="M7 14h4v4H7z" fill="#00a4ef" />
                            <path d="M12 14h4v4h-4z" fill="#ffb900" />
                        </svg>
                    </Slot>
                    <Slot>
                        <svg width="24" height="22" viewBox="0 0 24 22">
                            <path d="M0 8l12-8 12 8v14H0z" fill="#1a84d8" />
                            <path d="M0 8l12 8 12-8v14H0z" fill="#43b4f5" />
                            <path d="M0 8l12 8 12-8" fill="none" stroke="#ffffff" strokeWidth="1" />
                        </svg>
                    </Slot>
                    <Slot>
                        <svg width="24" height="24" viewBox="0 0 24 24">
                            <circle cx="12" cy="12" r="12" fill="#1c7ac9" />
                            <path d="M24 13C24 5 18 0 12 0 7 0 3 2 1 7c3-3 8-4 12-2 4 1 5 4 3 6h8z" fill="#46d18a" />
                            <path d="M5 13c0-5 5-7 8-6 3 2 3 4 3 6-2 3-6 2-6-1 0 5 5 8 11 6-3 4-8 6-12 4-3-2-4-5-4-9z" fill="#0c3f78" />
                        </svg>
                    </Slot>
                    <Slot>
                        <div className="flex items-center justify-center w-[24px] h-[24px] bg-[#ef443b]">
                            <svg width="18" height="10" viewBox="0 0 18 10">
                                <path d="M6 0l5 5-5 5-5-5z" fill="#ffffff" />
                                <path d="M12 1l4 4-4 4-2 0 4-4-4-4z" fill="#ffffff" />
                            </svg>
                        </div>
                    </Slot>
                    <Slot active>
                        <ExcelMark size="w-[23px] h-[20px]" />
                    </Slot>
                    <Slot>
                        <div className="flex items-center justify-center w-[24px] h-[24px] rounded-[2px] bg-[#d7e6f2]">
                            <svg width="18" height="16" viewBox="0 0 18 16">
                                <path d="M.5.5h15v11H.5zM4 14.500h8" fill="#c9d6e0" stroke="#8499ab" />
                                <circle cx="13" cy="11" r="3" fill="#ffffff" />
                                <circle cx="13" cy="11" r="2" fill="#d9403a" />
                            </svg>
                        </div>
                    </Slot>
                    <Slot>
                        <div className="flex items-center justify-center w-[24px] h-[24px] rounded-[9px] bg-[#0b5cff] text-[11px] font-bold tracking-normal">zm</div>
                    </Slot>
                    <Slot>
                        <svg width="24" height="24" viewBox="0 0 24 24">
                            <path d="M17 0l7 3v18l-7 3L6 13l-4 3-2-1V9l2-1 4 3z" fill="#0f78c4" />
                            <path d="M17 0l7 3v18l-7 3z" fill="#2ba0ef" />
                            <path d="M17 7l-6 5 6 5z" fill="#1f3541" />
                        </svg>
                    </Slot>
                    <Slot>
                        <svg width="24" height="22" viewBox="0 0 24 22">
                            <path d="M12 3h12v16H12z" fill="#ffffff" />
                            <path d="M14 6h8M14 9h8M14 12h8M14 15h8" stroke="#2b579a" strokeWidth="1.400" />
                            <path d="M0 3l14-3v22L0 19z" fill="#2b579a" />
                            <text x="2.500" y="15" fontSize="11" fontWeight="700" fill="#ffffff" fontFamily="Liberation Sans">W</text>
                        </svg>
                    </Slot>
                    <Slot>
                        <svg width="24" height="24" viewBox="0 0 24 24">
                            <circle cx="12" cy="12" r="12" fill="#e8443a" />
                            <path d="M12 6h10.600A12 12 0 0 1 13 24z" fill="#fbbc05" />
                            <path d="M13 24A12 12 0 0 1 2 5.500L8 15z" fill="#34a853" />
                            <circle cx="12" cy="12" r="5.500" fill="#4a8cf0" stroke="#ffffff" strokeWidth="1.600" />
                        </svg>
                    </Slot>
                    <Slot>
                        <svg width="26" height="26" viewBox="0 0 26 26">
                            <path d="M1 15c0-6 7-10 13-9 3 1 4 3 3 5l-5 11c-6 2-11-1-11-7z" fill="#d5dbe0" />
                            <circle cx="7" cy="11" r="1.600" fill="#e0534a" />
                            <circle cx="11" cy="9" r="1.600" fill="#67b356" />
                            <circle cx="5" cy="16" r="1.600" fill="#4a8cf0" />
                            <path d="M24 1l1 2-8 16-3-2z" fill="#c98a3c" />
                        </svg>
                    </Slot>
                </div>
                <div className="flex flex-col items-center justify-between w-[18px] h-[40px] ml-[2px] py-[6px] bg-[#f4f4f4] shrink-0">
                    <svg width="10" height="6" viewBox="0 0 10 6"><path d="M1 5l4-4 4 4" fill="none" stroke="#444444" strokeWidth="1.600" /></svg>
                    <svg width="10" height="6" viewBox="0 0 10 6"><path d="M1 1l4 4 4-4" fill="none" stroke="#444444" strokeWidth="1.600" /></svg>
                </div>
                <div className="relative ml-[21px] w-[28px] h-[24px] shrink-0">
                    <svg width="28" height="20" viewBox="0 0 28 20" className="absolute left-0 bottom-0">
                        <path d="M5 20a5 5 0 0 1-1-10 8 8 0 0 1 15-2 6 6 0 0 1 3 12z" fill="#b7d3ef" />
                    </svg>
                    <div className="absolute right-[2px] top-[-2px] flex items-center justify-center w-[13px] h-[13px] rounded-full bg-[#c8281f] text-[9px] tracking-normal">1</div>
                </div>
                <span className="ml-[6px] text-[13px] tracking-normal w-[29px] whitespace-nowrap">29°C</span>
                <svg width="12" height="7" viewBox="0 0 12 7" className="ml-[18px]"><path d="M1 6l5-5 5 5" fill="none" stroke="#ffffff" strokeWidth="1.200" /></svg>
                <svg width="12" height="18" viewBox="0 0 12 18" className="ml-[13px]">
                    <path d="M2 1c2-1 6-1 8 0M2 17c2 1 6 1 8 0" fill="none" stroke="#ffffff" />
                    <rect x="1" y="5" width="7" height="8" fill="none" stroke="#ffffff" />
                    <path d="M8 8l3-2v6l-3-2" fill="none" stroke="#ffffff" />
                </svg>
                <svg width="15" height="15" viewBox="0 0 15 15" className="ml-[12px]">
                    <path d="M1 14C1 7 7 1 14 1M4 14c0-5 5-10 10-10M7 14c0-4 3-7 7-7M10 14c0-2 2-4 4-4" fill="none" stroke="#ffffff" strokeDasharray="2 1" />
                </svg>
                <svg width="17" height="15" viewBox="0 0 17 15" className="ml-[7px]">
                    <path d="M1 5h3l4-4v13l-4-4H1z" fill="none" stroke="#ffffff" />
                    <path d="M11 4c1 2 1 5 0 7M14 2c2 3 2 8 0 11" fill="none" stroke="#ffffff" />
                </svg>
                <svg width="17" height="13" viewBox="0 0 17 13" className="ml-[7px]">
                    <path d="M5 2h12v9H5zM0 4h4M0 8h4M2 0v3" fill="none" stroke="#ffffff" />
                    <path d="M7 4h8v5H7z" fill="#ffffff" />
                </svg>
                <div className="flex flex-col items-center w-[54px] ml-[7px] text-[12px] leading-[19px] whitespace-nowrap shrink-0">
                    <span>10:25 AM</span>
                    <span>7/15/2025</span>
                </div>
                <div className="relative ml-[18px] w-[24px] h-[28px] shrink-0">
                    <svg width="16" height="16" viewBox="0 0 16 16" className="absolute left-0 top-[2px]">
                        <path d="M0 0h16v12H5l-3 3v-3H0z" fill="#ffffff" />
                        <path d="M3 3h10M3 6h10M3 9h7" stroke="#1b2a42" />
                    </svg>
                    <div className="absolute right-[-2px] bottom-0 flex items-center justify-center w-[18px] h-[18px] rounded-full bg-[#3c3c3c] border border-[#888888] text-[12px] font-bold tracking-normal">2</div>
                </div>
            </div>
        </div>
    );
}
